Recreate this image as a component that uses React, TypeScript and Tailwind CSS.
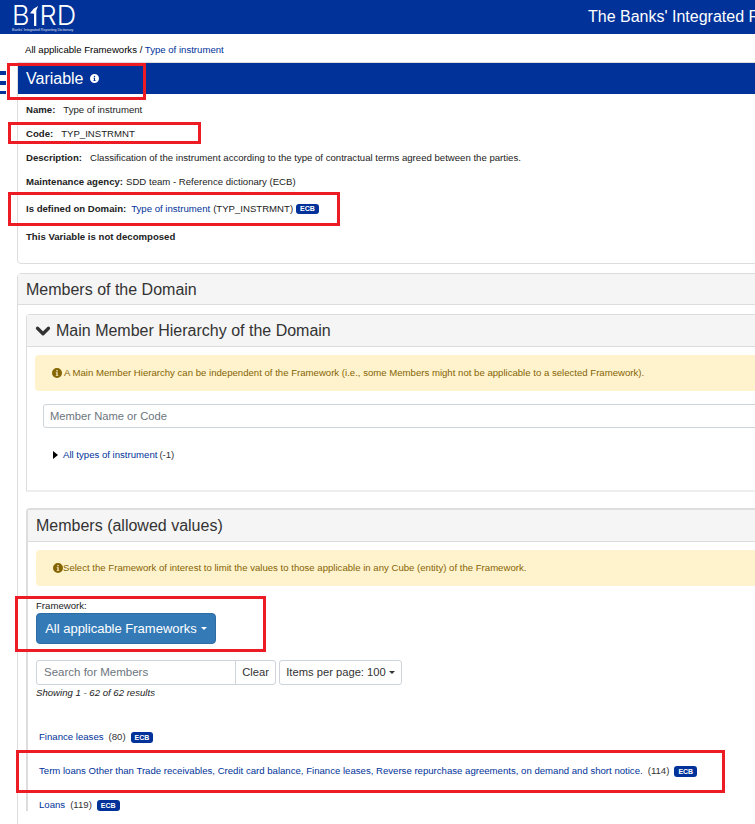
import { ChevronDown } from "lucide-react";

function EcbBadge({ className }: { className: string }) {
  return (
    <span className={`inline-block rounded-[3px] bg-[#003299] px-[4px] text-[7px] font-bold text-white ${className}`}>
      ECB
    </span>
  );
}

function InfoDot({ className }: { className: string }) {
  return (
    <svg viewBox="0 0 16 16" className={className} fill="currentColor">
      <path d="M8 0a8 8 0 1 0 0 16A8 8 0 0 0 8 0Zm0 3a1.3 1.3 0 1 1 0 2.6A1.3 1.3 0 0 1 8 3Zm2 9.5H6v-1.2h1V8H6V6.8h3v4.5h1v1.2Z" />
    </svg>
  );
}

function Logo() {
  return (
    <div className="flex w-[66px] flex-col">
      <div className="flex h-[24px] items-center font-['Inter',sans-serif] text-[27px] leading-[24px] font-light text-white">
        <span>B</span>
        <svg viewBox="0 0 10 24" className="h-[22px] w-[9px]" fill="white">
          <path d="M0 9 4 4 9 1 7 6V23H4.5V9.5Z" />
        </svg>
        <span className="ml-[1px]">RD</span>
      </div>
      <div className="text-[3.6px] leading-[5px] whitespace-nowrap text-white/80">
        Banks' Integrated Reporting Dictionary
      </div>
    </div>
  );
}

function RedBox({ className }: { className: string }) {
  return <div className={`pointer-events-none absolute border-[3px] border-[#ed1c24] ${className}`} />;
}

function MemberRow({ name, count }: { name: string; count: number }) {
  return (
    <div className="flex items-center gap-[5px] text-[9.6px] leading-[12px] whitespace-nowrap text-[#333]">
      <a className="text-[#003299]">{name}</a>
      <span>({count})</span>
      <EcbBadge className="h-[11px] leading-[11px]" />
    </div>
  );
}

export default function App() {
  return (
    <div className="relative h-[824px] w-[755px] overflow-hidden bg-white font-['Liberation_Sans',Arial,sans-serif] text-[#333]">
      <div className="w-[1100px]">
        <header className="flex h-[34px] items-start bg-[#003299] pt-[4px] pl-[12px]">
          <Logo />
          <div className="ml-[510px] text-[16px] leading-[26px] whitespace-nowrap text-white">
            The Banks' Integrated Reporting Dictionary
          </div>
        </header>

        <div className="h-[28px] pt-[10px] pl-[25px] text-[9.6px] leading-[12px] text-black">
          All applicable Frameworks / <a className="text-[#003299]">Type of instrument</a>
        </div>

        <div className="ml-[17px]">
          {/* Variable panel */}
          <section className="h-[202px] rounded-b-[4px] border border-[#ddd]">
            <div className="flex h-[31px] items-center gap-[6px] bg-[#003299] pl-[8px] text-[16px] text-white">
              Variable
              <InfoDot className="h-[9px] w-[9px] text-white" />
            </div>
            <div className="pt-[10px] pl-[8px] text-[9.6px] leading-[12px] text-[#222]">
              <div><b className="mr-[8px]">Name:</b>Type of instrument</div>
              <div className="mt-[12px]"><b className="mr-[8px]">Code:</b>TYP_INSTRMNT</div>
              <div className="mt-[12px]">
                <b className="mr-[8px]">Description:</b>
                Classification of the instrument according to the type of contractual terms agreed between the parties.
              </div>
              <div className="mt-[12px]"><b className="mr-[3px]">Maintenance agency:</b>SDD team - Reference dictionary (ECB)</div>
              <div className="mt-[15px] flex items-center gap-[3px]">
                <b className="mr-[2px]">Is defined on Domain:</b>
                <a className="text-[#003299]">Type of instrument</a>
                <span>(TYP_INSTRMNT)</span>
                <EcbBadge className="h-[10px] leading-[10px]" />
              </div>
              <div className="mt-[16px]"><b>This Variable is not decomposed</b></div>
            </div>
          </section>

          {/* Members of the Domain */}
          <section className="mt-[9px] h-[700px] rounded-t-[4px] border border-[#ddd]">
            <h2 className="flex h-[31px] items-center border-b border-[#ddd] bg-[#f5f5f5] pt-[2px] pl-[8px] text-[16px] text-[#333]">
              Members of the Domain
            </h2>

            <div className="px-[8px] pt-[9px]">
              <div className="h-[178px] rounded-t-[4px] border border-b-2 border-[#ddd] border-b-[#eee]">
                <h3 className="flex h-[32px] items-center gap-[2px] border-b border-[#ddd] bg-[#f5f5f5] pl-[5px] text-[16px] text-[#333]">
                  <ChevronDown className="h-[22px] w-[22px]" strokeWidth={3.5} />
                  Main Member Hierarchy of the Domain
                </h3>
                <div className="px-[8px] pt-[8px]">
                  <div className="flex h-[36px] items-center gap-[2px] rounded-[4px] bg-[#fff3cd] pl-[17px] text-[9.6px] text-[#856404]">
                    <InfoDot className="h-[10px] w-[10px]" />
                    A Main Member Hierarchy can be independent of the Framework (i.e., some Members might not be applicable to a selected Framework).
                  </div>
                  <div className="mt-[13px] ml-[8px] flex h-[24px] items-center rounded-[3px] border border-[#ced4da] pl-[6px] text-[11.2px] text-[#6c757d]">
                    Member Name or Code
                  </div>
                  <div className="mt-[21px] ml-[18px] flex items-center gap-[5px] text-[9.6px] leading-[12px]">
                    <span className="h-0 w-0 border-y-[4px] border-l-[5px] border-y-transparent border-l-black" />
                    <a className="text-[#003299]">All types of instrument</a>
                    <span className="-ml-[3px]">(-1)</span>
                  </div>
                </div>
              </div>

              <div className="mt-[16px] rounded-t-[4px] border-2 border-b-0 border-[#ddd]">
                <h3 className="flex h-[32px] items-center border-b border-[#ddd] bg-[#f5f5f5] pl-[8px] text-[16px] text-[#333]">
                  Members (allowed values)
                </h3>
                <div className="px-[8px] pt-[8px]">
                  <div className="flex h-[36px] items-center rounded-[4px] bg-[#fff3cd] pl-[17px] text-[9.6px] text-[#856404]">
                    <InfoDot className="h-[10px] w-[10px]" />
                    Select the Framework of interest to limit the values to those applicable in any Cube (entity) of the Framework.
                  </div>
                  <div className="mt-[14px] text-[9.6px] leading-[12px] text-[#222]">Framework:</div>
                  <button className="mt-[1px] flex h-[31px] w-[180px] items-center justify-center gap-[4px] rounded-[4px] border border-[#2e6da4] bg-[#337ab7] text-[13px] text-white">
                    All applicable Frameworks
                    <span className="h-0 w-0 border-x-[3px] border-t-[3px] border-x-transparent border-t-white" />
                  </button>
                  <div className="mt-[16px] flex items-center gap-[3px]">
                    <div className="flex h-[25px] w-[240px] overflow-hidden rounded-[3px] border border-[#ced4da] text-[11.2px]">
                      <div className="flex w-[198px] items-center pl-[7px] text-[11.5px] text-[#6c757d]">Search for Members</div>
                      <div className="flex flex-1 items-center justify-center border-l border-[#ced4da] text-[#333]">Clear</div>
                    </div>
                    <div className="flex h-[25px] w-[123px] items-center justify-center gap-[3px] rounded-[3px] border border-[#ced4da] text-[11.2px] text-[#333]">
                      Items per page: 100
                      <span className="h-0 w-0 border-x-[3px] border-t-[3px] border-x-transparent border-t-[#333]" />
                    </div>
                  </div>
                  <div className="mt-[1px] text-[9.6px] leading-[13px] italic text-[#222]">Showing 1 - 62 of 62 results</div>

                  <div className="mt-[32px] ml-[3px] flex flex-col gap-[22px]">
                    <MemberRow name="Finance leases" count={80} />
                    <MemberRow
                      name="Term loans Other than Trade receivables, Credit card balance, Finance leases, Reverse repurchase agreements, on demand and short notice."
                      count={114}
                    />
                    <MemberRow name="Loans" count={119} />
                  </div>
                </div>
              </div>
            </div>
          </section>
        </div>
      </div>

      {/* hamburger tab */}
      <div className="absolute top-[71px] left-0 flex flex-col gap-[6px]">
        <span className="h-[4px] w-[6px] bg-[#003299]" />
        <span className="h-[4px] w-[6px] bg-[#003299]" />
        <span className="h-[3px] w-[6px] bg-[#003299]" />
      </div>

      {/* annotation boxes */}
      <RedBox className="top-[63px] left-[7px] h-[37px] w-[139px]" />
      <RedBox className="top-[122px] left-[8px] h-[22px] w-[193px]" />
      <RedBox className="top-[192px] left-[8px] h-[34px] w-[332px]" />
      <RedBox className="top-[596px] left-[15px] h-[56px] w-[251px]" />
      <RedBox className="top-[750px] left-[16px] h-[43px] w-[709px]" />
    </div>
  );
}
